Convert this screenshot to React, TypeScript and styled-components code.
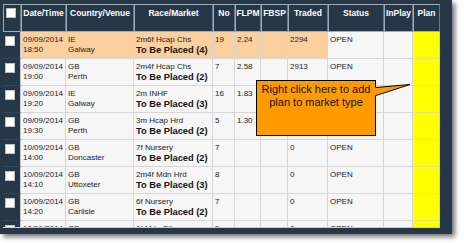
import React from 'react';
import styled, { createGlobalStyle } from 'styled-components';

const COLS = '18px 45px 68px 79px 22px 26px 27px 40px 56px 29px 27px';

const FRAME = '#263747';
const GRID = '#d6d6d6';

const GlobalStyle = createGlobalStyle`
  html, body {
    margin: 0;
    padding: 0;
    background: #ffffff;
  }
  body {
    font-family: "Liberation Sans", Arial, sans-serif;
  }
`;

interface Market {
  date: string;
  time: string;
  country: string;
  venue: string;
  race: string;
  market: string;
  no: string;
  flpm: string;
  traded: string;
  status: string;
  selected?: boolean;
}

// rows 3 and 4 sit under the callout, so their traded/status are left blank
const markets: Market[] = [
  { date: '09/09/2014', time: '18:50', country: 'IE', venue: 'Galway', race: '2m6f Hcap Chs', market: 'To Be Placed (4)', no: '19', flpm: '2.24', traded: '2294', status: 'OPEN', selected: true },
  { date: '09/09/2014', time: '19:00', country: 'GB', venue: 'Perth', race: '2m4f Hcap Chs', market: 'To Be Placed (2)', no: '7', flpm: '2.58', traded: '2913', status: 'OPEN' },
  { date: '09/09/2014', time: '19:20', country: 'IE', venue: 'Galway', race: '2m INHF', market: 'To Be Placed (3)', no: '16', flpm: '1.83', traded: '', status: '' },
  { date: '09/09/2014', time: '19:30', country: 'GB', venue: 'Perth', race: '3m Hcap Hrd', market: 'To Be Placed (2)', no: '5', flpm: '1.30', traded: '', status: '' },
  { date: '10/09/2014', time: '14:00', country: 'GB', venue: 'Doncaster', race: '7f Nursery', market: 'To Be Placed (2)', no: '7', flpm: '', traded: '0', status: 'OPEN' },
  { date: '10/09/2014', time: '14:10', country: 'GB', venue: 'Uttoxeter', race: '2m4f Mdn Hrd', market: 'To Be Placed (3)', no: '8', flpm: '', traded: '0', status: 'OPEN' },
  { date: '10/09/2014', time: '14:20', country: 'GB', venue: 'Carlisle', race: '6f Nursery', market: 'To Be Placed (2)', no: '7', flpm: '', traded: '0', status: 'OPEN' },
  { date: '10/09/2014', time: '14:30', country: 'GB', venue: 'Doncaster', race: '6f Mdn Stks', market: 'To Be Placed (2)', no: '5', flpm: '', traded: '0', status: 'OPEN' }
];

const headers = ['Date/Time', 'Country/Venue', 'Race/Market', 'No', 'FLPM', 'FBSP', 'Traded', 'Status', 'InPlay', 'Plan'];

export default function App() {
  return (
    <Page>
      <GlobalStyle />
      <Frame>
        <Viewport>
          <HeaderRow>
            <HeaderCell>
              <CheckBox />
            </HeaderCell>
            {headers.map((h) => (
              <HeaderCell key={h}>{h}</HeaderCell>
            ))}
          </HeaderRow>
          {markets.map((m, i) => (
            <Row key={i}>
              <CheckCell>
                <CheckBox />
              </CheckCell>
              <Cell $hot={m.selected}>
                <div>{m.date}</div>
                <div>{m.time}</div>
              </Cell>
              <Cell $hot={m.selected}>
                <div>{m.country}</div>
                <div>{m.venue}</div>
              </Cell>
              <Cell $hot={m.selected}>
                <div>{m.race}</div>
                <MarketName>{m.market}</MarketName>
              </Cell>
              <Cell $hot={m.selected}>{m.no}</Cell>
              <Cell $hot={m.selected}>{m.flpm}</Cell>
              <Cell $hot={m.selected}></Cell>
              <Cell $hot={m.selected}>{m.traded}</Cell>
              <Cell>{m.status}</Cell>
              <Cell></Cell>
              <PlanCell></PlanCell>
            </Row>
          ))}
          <Callout>
            Right click here to add
            <br />
            plan to market type
            <Pointer width="37" height="16" viewBox="0 0 37 16">
              <polygon points="0,5.5 35,2.5 0,13.5" fill="#ff9a00" />
              <polyline
                points="1,5.5 35,2.5 1,13.5"
                fill="none"
                stroke="#000"
                strokeWidth="1"
              />
            </Pointer>
          </Callout>
        </Viewport>
      </Frame>
    </Page>
  );
}

const Page = styled.div`
  width: 464px;
  height: 243px;
  overflow: hidden;
  background: #ffffff;
`;

const Frame = styled.div`
  width: 452px;
  height: 234px;
  box-sizing: border-box;
  padding: 4px 12px 0 3px;
  background: ${FRAME};
  box-shadow: 3px 3px 5px rgba(0, 0, 0, 0.55);
`;

const Viewport = styled.div`
  position: relative;
  height: 224px;
  overflow: hidden;
  border-bottom: 1px solid #c9cdd1;
  box-sizing: border-box;
`;

const HeaderRow = styled.div`
  display: grid;
  grid-template-columns: ${COLS};
  height: 28px;
`;

const HeaderCell = styled.div`
  box-sizing: border-box;
  background: ${FRAME};
  border-top: 1px solid #a3adb7;
  border-left: 1px solid #a3adb7;
  border-right: 1px solid #6c7985;
  border-bottom: 1px solid #a3adb7;
  color: #ffffff;
  font-weight: bold;
  font-size: 8.5px;
  line-height: 10px;
  padding-top: 3px;
  text-align: center;
  white-space: nowrap;
  overflow: hidden;
`;

const Row = styled.div`
  display: grid;
  grid-template-columns: ${COLS};
  height: 27px;
`;

const CheckCell = styled.div`
  box-sizing: border-box;
  background: ${FRAME};
  border-bottom: 1px solid #33465a;
  border-right: 1px solid #c9cdd1;
  padding-top: 4px;
`;

const CheckBox = styled.div`
  width: 10px;
  height: 10px;
  box-sizing: border-box;
  margin-left: 2px;
  background: #ffffff;
  border: 1px solid #b8c0c8;
`;

const Cell = styled.div<{ $hot?: boolean }>`
  box-sizing: border-box;
  background: ${(p) => (p.$hot ? '#fccf9f' : '#f6f6f6')};
  border-right: 1px solid ${GRID};
  border-bottom: 1px solid ${GRID};
  padding: 3px 0 0 2px;
  color: #222222;
  font-size: 8px;
  line-height: 10px;
  white-space: nowrap;
  overflow: hidden;
`;

const PlanCell = styled(Cell)`
  background: #ffff00;
  border-bottom-color: #e2e27a;
  border-right-color: #c9cdd1;
`;

const MarketName = styled.div`
  font-weight: bold;
  font-size: 9.3px;
  line-height: 11px;
  color: #111111;
`;

const Callout = styled.div`
  position: absolute;
  left: 253px;
  top: 76px;
  width: 120px;
  height: 56px;
  box-sizing: border-box;
  background: #ff9a00;
  border: 1px solid #000000;
  padding-top: 2px;
  color: #111111;
  font-size: 11px;
  line-height: 13px;
  text-align: center;
`;

const Pointer = styled.svg`
  position: absolute;
  left: 118px;
  top: 1px;
  overflow: visible;
`;
